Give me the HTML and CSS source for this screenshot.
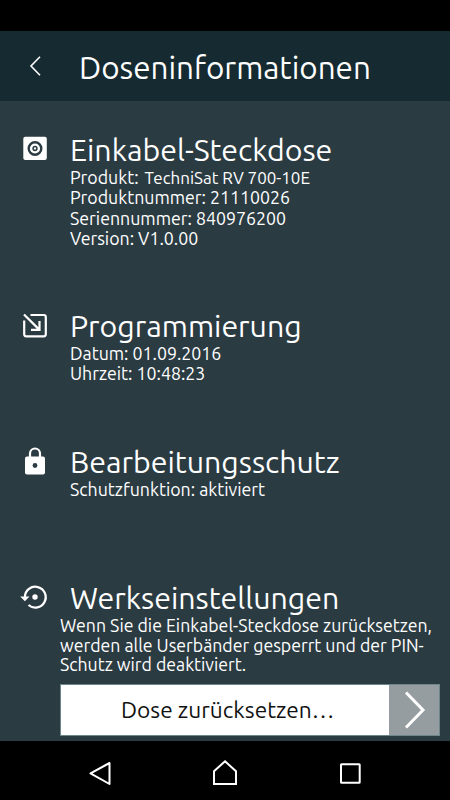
FILE: index.html
```
<!DOCTYPE html>
<html lang="de">
<head>
<meta charset="utf-8">
<title>Doseninformationen</title>
<link rel="stylesheet" href="styles.css">
</head>
<body>
<div class="screen">
  <div class="status"></div>
  <header class="header">
    <svg class="back" viewBox="0 0 12 20"><path d="M11 .8 2 10l9 9.200" fill="none" stroke="#fff" stroke-width="1.600"/></svg>
    <h1 class="title">Doseninformationen</h1>
  </header>
  <main class="content">
    <section class="item outlet">
      <svg class="icon" viewBox="0 0 28 28"><rect x="2.300" y="1.800" width="23.500" height="23.200" rx="2" fill="#fff"/><circle cx="14" cy="13.500" r="6.300" fill="none" stroke="#2b3b42" stroke-width="2.400"/><circle cx="14" cy="13.500" r="1.900" fill="none" stroke="#2b3b42" stroke-width="1.500"/></svg>
      <div class="body">
        <h2 class="heading">Einkabel-Steckdose</h2>
        <p class="line">Produkt: <span class="model">TechniSat RV 700-10E</span></p>
        <p class="line">Produktnummer: 21110026</p>
        <p class="line">Seriennummer: 840976200</p>
        <p class="line">Version: V1.0.00</p>
      </div>
    </section>
    <section class="item programming">
      <svg class="icon" viewBox="0 0 28 28"><path d="M9.500 4H22.800a2 2 0 0 1 2 2V23.300a2 2 0 0 1-2 2H5.200a2 2 0 0 1-2-2V9.500M3 3.500 17.500 17.900M18.500 10v8.800H10" fill="none" stroke="#fff" stroke-width="2.200"/></svg>
      <div class="body">
        <h2 class="heading">Programmierung</h2>
        <p class="line">Datum: 01.09.2016</p>
        <p class="line">Uhrzeit: 10:48:23</p>
      </div>
    </section>
    <section class="item protection">
      <svg class="icon" viewBox="0 0 28 28"><path d="M9 10V6.500a5 5 0 0 1 10 0V10" fill="none" stroke="#fff" stroke-width="2.200"/><rect x="4" y="9.500" width="20" height="18" rx="2" fill="#fff"/><circle cx="14" cy="18.500" r="2.400" fill="#2b3b42"/></svg>
      <div class="body">
        <h2 class="heading">Bearbeitungsschutz</h2>
        <p class="line">Schutzfunktion: aktiviert</p>
      </div>
    </section>
    <section class="item factory">
      <svg class="icon" viewBox="0 0 28 28"><path d="M3.900 14A10.400 10.400 0 1 1 7.500 22" fill="none" stroke="#fff" stroke-width="2.300"/><path d="M-.8 13.500h9.300L3.900 18.200z" fill="#fff"/><circle cx="14" cy="14" r="2.700" fill="#fff"/></svg>
      <div class="body">
        <h2 class="heading">Werkseinstellungen</h2>
      </div>
    </section>
    <div class="reset">
      <p class="note">Wenn Sie die Einkabel-Steckdose zurücksetzen,</p>
      <p class="note">werden alle Userbänder gesperrt und der PIN-</p>
      <p class="note">Schutz wird deaktiviert.</p>
      <button class="button">
        <span class="label">Dose zurücksetzen…</span>
        <span class="arrow"><svg class="chevron" viewBox="0 0 20 38"><path d="M2 1.500 19 19 2 36.500" fill="none" stroke="#fff" stroke-width="3"/></svg></span>
      </button>
    </div>
  </main>
  <nav class="nav">
    <svg viewBox="0 0 30 30"><path d="M5.500 16.300 24.500 6v21z" fill="none" stroke="#fff" stroke-width="2" stroke-linejoin="round"/></svg>
    <svg viewBox="0 0 30 30"><path d="M15 4.300 26 14.200v12.800H4V14.200z" fill="none" stroke="#fff" stroke-width="2"/></svg>
    <svg viewBox="0 0 30 30"><rect x="6" y="7.300" width="18.700" height="18.500" rx=".5" fill="none" stroke="#fff" stroke-width="2"/></svg>
  </nav>
</div>
</body>
</html>
```
FILE: styles.css
```
* { box-sizing: border-box; }
body { margin: 0; background: #000; color: #fff; font-family: Ubuntu, "Noto Sans", sans-serif; }
h1, h2, p { margin: 0; font-weight: 400; white-space: nowrap; }
svg { display: block; flex: none; overflow: visible; }
.screen { width: 450px; height: 800px; display: flex; flex-direction: column; overflow: hidden; }
.status { height: 31px; flex: none; background: #000; }
.header { height: 70px; flex: none; display: flex; align-items: center; padding-left: 29px; background: #152a31; }
.back { width: 12px; height: 20px; }
.title { margin: 4px 0 0 38px; font-size: 31.4px; line-height: 40px; }
.content { height: 640px; flex: none; padding-top: 34px; background: #2b3b42; }
.item { display: flex; padding-left: 21px; }
.icon { width: 28px; height: 28px; }
.body { margin-left: 21px; }
.outlet { height: 176px; }
.programming, .protection { height: 136px; }
.factory { height: 32px; }
.heading { font-size: 30.3px; line-height: 30px; margin-bottom: 2px; }
.line { height: 20.4px; font-size: 17.75px; line-height: 20px; }
.model { font-size: 17px; line-height: 1; margin-left: 2px; }
.reset { padding: 1px 0 0 60px; }
.note { font-size: 17.7px; line-height: 19.6px; }
.button { width: 380px; height: 52px; margin: 9px 0 0; padding: 0; display: flex; border: 1px solid #6e8589; background: #fff; color: #111; font-family: inherit; }
.label { width: 328px; height: 50px; padding-left: 60px; text-align: left; font-size: 22.7px; line-height: 50px; white-space: nowrap; }
.arrow { width: 50px; height: 50px; display: flex; align-items: center; justify-content: center; background: #959da0; }
.chevron { width: 20px; height: 38px; }
.nav { height: 59px; flex: none; display: flex; justify-content: space-between; padding: 16px 85px 0; }
.nav svg { width: 30px; height: 30px; }
```
